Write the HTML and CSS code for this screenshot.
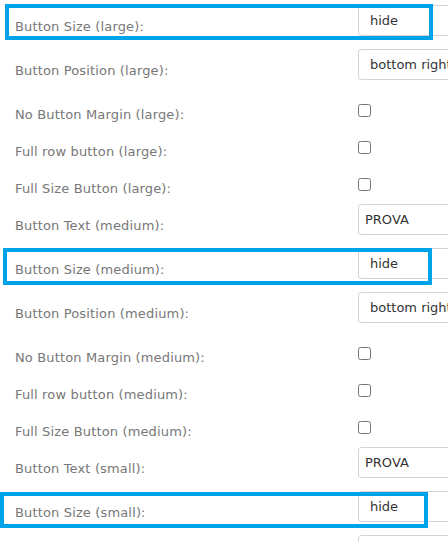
FILE: index.html
```html
<!DOCTYPE html>
<html>
<head>
<meta charset="utf-8">
<link rel="stylesheet" href="styles.css">
</head>
<body>
<div class="form">
  <div class="row"><label class="lbl">Button Size (large):</label><select class="sel"><option>hide</option></select></div>
  <div class="row"><label class="lbl">Button Position (large):</label><select class="sel"><option>bottom right</option></select></div>
  <div class="row cbrow"><label class="lbl">No Button Margin (large):</label><input type="checkbox" class="cb"></div>
  <div class="row cbrow"><label class="lbl">Full row button (large):</label><input type="checkbox" class="cb"></div>
  <div class="row cbrow"><label class="lbl">Full Size Button (large):</label><input type="checkbox" class="cb"></div>
  <div class="row"><label class="lbl">Button Text (medium):</label><input type="text" class="txt" value="PROVA"></div>
  <div class="row"><label class="lbl">Button Size (medium):</label><select class="sel"><option>hide</option></select></div>
  <div class="row"><label class="lbl">Button Position (medium):</label><select class="sel"><option>bottom right</option></select></div>
  <div class="row cbrow"><label class="lbl">No Button Margin (medium):</label><input type="checkbox" class="cb"></div>
  <div class="row cbrow"><label class="lbl">Full row button (medium):</label><input type="checkbox" class="cb"></div>
  <div class="row cbrow"><label class="lbl">Full Size Button (medium):</label><input type="checkbox" class="cb"></div>
  <div class="row"><label class="lbl">Button Text (small):</label><input type="text" class="txt" value="PROVA"></div>
  <div class="row"><label class="lbl">Button Size (small):</label><select class="sel"><option>hide</option></select></div>
  <div class="row last"><select class="sel"><option>bottom right</option></select></div>
</div>
<div class="mark mark1"></div>
<div class="mark mark2"></div>
<div class="mark mark3"></div>
</body>
</html>
```
FILE: styles.css
```css
html, body {
  margin: 0;
  padding: 0;
  background: #fff;
  overflow: hidden;
  width: 448px;
  height: 542px;
}
.form {
  display: flex;
  flex-direction: column;
  width: 620px;
}
.row {
  display: flex;
  align-items: flex-start;
  height: 44px;
}
.row.cbrow {
  height: 37px;
}
.row.last {
  padding-left: 358px;
}
.lbl {
  box-sizing: border-box;
  width: 358px;
  flex: none;
  padding: 19px 0 0 15px;
  font-family: "DejaVu Sans", sans-serif;
  font-size: 13px;
  letter-spacing: 0.15px;
  line-height: 15px;
  color: #777;
}
.sel, .txt {
  box-sizing: border-box;
  margin: 5px 0 0 0;
  height: 31px;
  width: 220px;
  border: 1px solid #d4d4d4;
  border-radius: 3px;
  background: #fff;
  font-family: "DejaVu Sans", sans-serif;
  font-size: 13px;
  color: #333;
  -webkit-appearance: none;
  appearance: none;
  outline: none;
}
.sel {
  padding: 0 0 0 11px;
}
.txt {
  padding: 0 0 0 6px;
}
.cb {
  margin: 16px 0 0 0;
  width: 13px;
  height: 13px;
}
.mark {
  position: absolute;
  border: 4px solid #00a2e8;
  box-sizing: border-box;
}
.mark1 { left: 5px; top: 4px; width: 428px; height: 36px; }
.mark2 { left: 3px; top: 248px; width: 429px; height: 37px; }
.mark3 { left: 0; top: 492px; width: 428px; height: 36px; }
```
